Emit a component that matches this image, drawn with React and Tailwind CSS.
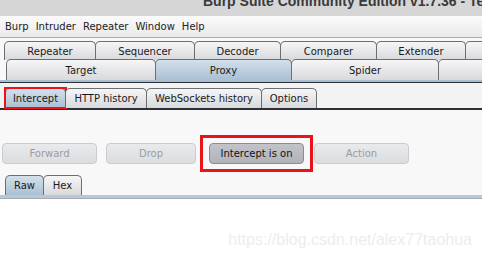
import React from 'react';

const font = { fontFamily: '"DejaVu Sans", Verdana, sans-serif' };

const row1 = [
  { label: 'Repeater', w: 'w-[92px]' },
  { label: 'Sequencer', w: 'w-[100px]' },
  { label: 'Decoder', w: 'w-[87px]' },
  { label: 'Comparer', w: 'w-[97px]' },
  { label: 'Extender', w: 'w-[90px]' },
  { label: '', w: 'w-[60px]' },
];

const row2 = [
  { label: 'Target', w: 'w-[150px]' },
  { label: 'Proxy', w: 'w-[137px]', active: true },
  { label: 'Spider', w: 'w-[148px]' },
  { label: '', w: 'w-[60px]' },
];

const subTabs = [
  { label: 'Intercept', w: 'w-[61px]', active: true },
  { label: 'HTTP history', w: 'w-[82px]' },
  { label: 'WebSockets history', w: 'w-[116px]' },
  { label: 'Options', w: 'w-[56px]' },
];

function Tab({ label, w, active, h = 'h-[19px]' }) {
  return (
    <div
      className={`${w} ${h} shrink-0 -ml-px first:ml-0 flex items-center justify-center rounded-t-[5px] border border-b-0 border-[#6b6e73] text-[10px] text-[#1a1a1a] ${
        active
          ? 'bg-gradient-to-b from-[#d4e0ea] to-[#a9c0d3]'
          : 'bg-gradient-to-b from-[#f6f6f7] to-[#d8d9dc]'
      }`}
    >
      {label}
    </div>
  );
}

function Btn({ label, on, w = 'w-[95px]' }) {
  return (
    <div
      className={`${w} h-[21px] shrink-0 flex items-center justify-center rounded-[4px] border text-[10px] ${
        on
          ? 'border-[#8a8c91] bg-gradient-to-b from-[#c2c4c9] to-[#b1b3b8] text-[#111]'
          : 'border-[#c9cbcf] bg-gradient-to-b from-[#e9eaec] to-[#dcdde0] text-[#9a9ca0]'
      }`}
    >
      {label}
    </div>
  );
}

export default function App() {
  return (
    <div className="w-[482px] h-[259px] overflow-hidden bg-[#f8f8f9] flex flex-col" style={font}>
      {/* title bar */}
      <div className="h-[16px] shrink-0 bg-[#d6d6d6] overflow-hidden relative">
        <div
          className="absolute left-[203px] top-[-9px] whitespace-nowrap text-[14px] font-bold text-[#3a3a3a]"
          style={{ fontFamily: '"Liberation Sans", Arial, sans-serif' }}
        >
          Burp Suite Community Edition v1.7.36 - Temporary Project
        </div>
      </div>
      {/* menu bar */}
      <div className="h-[22px] shrink-0 flex items-center gap-[7px] pl-[5px] text-[10px] text-[#222] bg-gradient-to-b from-[#fbfbfb] to-[#e9e9ea] border-b border-[#a9abb0]">
        <span>Burp</span>
        <span>Intruder</span>
        <span>Repeater</span>
        <span>Window</span>
        <span>Help</span>
      </div>
      {/* main tabs */}
      <div className="pt-[3px] pl-[4px] flex flex-col">
        <div className="flex">
          {row1.map((t, i) => (
            <Tab key={i} {...t} h="h-[19px]" />
          ))}
        </div>
        <div className="flex pl-[2px] -mt-px">
          {row2.map((t, i) => (
            <Tab key={i} {...t} h="h-[21px]" />
          ))}
        </div>
      </div>
      <div className="h-[2px] bg-[#a9c0d3] shrink-0" />
      <div className="h-px bg-[#2c2f36] shrink-0" />
      {/* sub tabs */}
      <div className="pt-[5px] pl-[5px] flex bg-[#f3f3f4]">
        {subTabs.map((t, i) => (
          <div key={i} className="relative -ml-px first:ml-0">
            <Tab {...t} h="h-[20px]" />
            {t.active && <div className="absolute inset-[-1px] border-2 border-[#e8141a] pointer-events-none" />}
          </div>
        ))}
      </div>
      <div className="h-[2px] bg-[#2c2f36] shrink-0" />
      {/* buttons */}
      <div className="flex items-center pt-[25px] pl-[2px]">
        <Btn label="Forward" />
        <div className="ml-[9px]">
          <Btn label="Drop" w="w-[90px]" />
        </div>
        <div className="ml-[4px] py-[5px] px-[6px] border-[3px] border-[#e8141a]">
          <Btn label="Intercept is on" on />
        </div>
        <div className="ml-[1px]">
          <Btn label="Action" />
        </div>
      </div>
      {/* raw/hex */}
      <div className="flex pl-[5px] mt-[3px]">
        <Tab label="Raw" w="w-[39px]" h="h-[20px]" active />
        <Tab label="Hex" w="w-[39px]" h="h-[20px]" />
      </div>
      <div className="h-[3px] bg-[#b5c9db] shrink-0" />
      <div className="h-px bg-[#a9abb0] shrink-0" />
      <div className="flex-1 bg-white flex items-start justify-end pr-[10px] pt-[32px]">
        <span className="text-[16px] leading-[18px] text-[#ededed]" style={{ fontFamily: '"Liberation Sans", Arial, sans-serif' }}>
          https://blog.csdn.net/alex77taohua
        </span>
      </div>
    </div>
  );
}
